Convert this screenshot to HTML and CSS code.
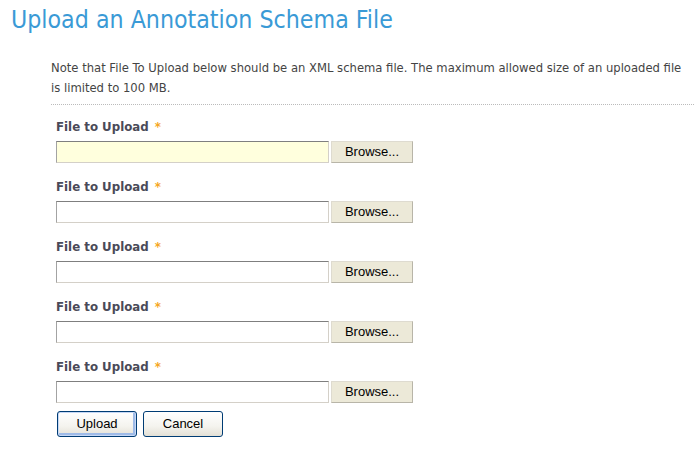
FILE: index.html
```html
<!DOCTYPE html>
<html>
<head>
<meta charset="utf-8">
<title>Upload an Annotation Schema File</title>
<link rel="stylesheet" href="styles.css">
</head>
<body>
<h1 class="title">Upload an Annotation Schema File</h1>
<div class="content">
  <p class="note">Note that File To Upload below should be an XML schema file. The maximum allowed size of an uploaded file is limited to 100 MB.</p>
  <form class="fields">
    <div class="field">
      <label class="label">File to Upload <span class="req">*</span></label>
      <div class="filerow"><span class="filebox hl"></span><span class="browse">Browse...</span></div>
    </div>
    <div class="field">
      <label class="label">File to Upload <span class="req">*</span></label>
      <div class="filerow"><span class="filebox"></span><span class="browse">Browse...</span></div>
    </div>
    <div class="field">
      <label class="label">File to Upload <span class="req">*</span></label>
      <div class="filerow"><span class="filebox"></span><span class="browse">Browse...</span></div>
    </div>
    <div class="field">
      <label class="label">File to Upload <span class="req">*</span></label>
      <div class="filerow"><span class="filebox"></span><span class="browse">Browse...</span></div>
    </div>
    <div class="field">
      <label class="label">File to Upload <span class="req">*</span></label>
      <div class="filerow"><span class="filebox"></span><span class="browse">Browse...</span></div>
    </div>
    <div class="actions">
      <span class="btn default">Upload</span>
      <span class="btn">Cancel</span>
    </div>
  </form>
</div>
</body>
</html>
```
FILE: styles.css
```css
html, body {
  margin: 0;
  padding: 0;
  background: #ffffff;
}
body {
  font-family: "DejaVu Sans", sans-serif;
}
.title {
  margin: 5px 0 0 11px;
  font-family: "DejaVu Sans Condensed", "DejaVu Sans", sans-serif;
  font-stretch: condensed;
  font-size: 24.7px;
  line-height: 30px;
  font-weight: normal;
  color: #3a9ad6;
  height: 30px;
}
.content {
  margin: 23px 2px 0 51px;
}
.note {
  margin: 0;
  font-size: 11.6px;
  line-height: 20px;
  color: #444444;
  padding-bottom: 6px;
  border-bottom: 1px dotted #bbbbbb;
  width: 643px;
}
.fields {
  display: flex;
  flex-direction: column;
  gap: 16px;
  margin: 14px 0 0 5px;
}
.field {
  display: flex;
  flex-direction: column;
  gap: 6px;
}
.label {
  font-size: 11.8px;
  line-height: 16px;
  font-weight: bold;
  color: #4a4a58;
  height: 16px;
}
.req {
  color: #f5a623;
  margin-left: 2px;
}
.filerow {
  display: flex;
  gap: 2px;
  height: 22px;
}
.filebox {
  box-sizing: border-box;
  width: 273px;
  height: 22px;
  background: #ffffff;
  border: 1px solid;
  border-color: #7f7f7f #d4d0c8 #d4d0c8 #a3a3a3;
}
.filebox.hl {
  background: #ffffdd;
}
.browse {
  box-sizing: border-box;
  width: 82px;
  height: 22px;
  background: #ece9d8;
  border: 1px solid;
  border-color: #dedbd0 #b8b5a8 #b8b5a8 #dedbd0;
  font-family: "Liberation Sans", Arial, sans-serif;
  font-size: 13px;
  line-height: 20px;
  text-align: center;
  color: #000000;
}
.actions {
  display: flex;
  gap: 6px;
  margin: -8px 0 0 1px;
}
.btn {
  box-sizing: border-box;
  width: 80px;
  height: 26px;
  border: 1px solid #003c74;
  border-radius: 3px;
  background: linear-gradient(#ffffff 0%, #f4f3ee 60%, #e3e0d6 100%);
  font-family: "Liberation Sans", Arial, sans-serif;
  font-size: 13px;
  line-height: 24px;
  text-align: center;
  color: #000000;
}
.btn.default {
  box-shadow: inset 0 0 0 1px #c6d8f6, inset -1px -1px 0 2px #9fbbe8;
}
```
